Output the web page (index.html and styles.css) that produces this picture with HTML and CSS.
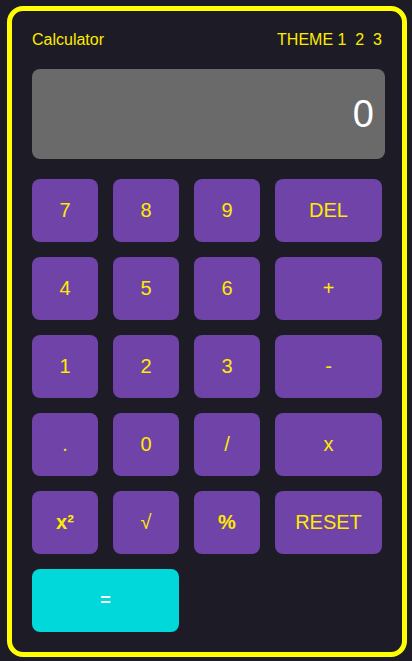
FILE: index.html
```html
<!DOCTYPE html>
<html>
<head>
<meta charset="utf-8">
<link rel="stylesheet" href="styles.css">
</head>
<body>
<div class="calc">
  <header class="top">
    <span class="title">Calculator</span>
    <span class="theme">THEME <span>1</span>  <span>2</span>  <span>3</span></span>
  </header>
  <div class="screen">0</div>
  <div class="keys">
    <button class="key">7</button>
    <button class="key">8</button>
    <button class="key">9</button>
    <button class="key">DEL</button>
    <button class="key">4</button>
    <button class="key">5</button>
    <button class="key">6</button>
    <button class="key">+</button>
    <button class="key">1</button>
    <button class="key">2</button>
    <button class="key">3</button>
    <button class="key">-</button>
    <button class="key">.</button>
    <button class="key">0</button>
    <button class="key">/</button>
    <button class="key">x</button>
    <button class="key bold">x²</button>
    <button class="key">√</button>
    <button class="key bold">%</button>
    <button class="key">RESET</button>
    <button class="key equal">=</button>
  </div>
</div>
</body>
</html>
```
FILE: styles.css
```css
html, body {
  margin: 0;
  padding: 0;
  background: #1c1b26;
}
body {
  padding: 6px 5px 4px 7px;
  font-family: "Liberation Sans", Arial, sans-serif;
}
.calc {
  box-sizing: border-box;
  width: 400px;
  height: 651px;
  border: 5px solid #ffff00;
  border-radius: 16px;
  padding: 20px 20px 0 20px;
}
.top {
  display: flex;
  justify-content: space-between;
  align-items: center;
  color: #ffeb00;
  font-size: 16px;
  line-height: 18px;
  height: 18px;
}
.theme {
  white-space: pre;
}
.screen {
  box-sizing: border-box;
  margin-top: 20px;
  height: 90px;
  width: 353px;
  background: #6a6a6a;
  border-radius: 8px;
  color: #ffffff;
  font-size: 38px;
  line-height: 1;
  display: flex;
  align-items: center;
  justify-content: flex-end;
  padding: 0 11px 0 0;
}
.keys {
  display: grid;
  grid-template-columns: 66px 66px 66px 107px;
  grid-auto-rows: 63px;
  gap: 15px;
  margin-top: 20px;
}
.key {
  border: none;
  border-radius: 8px;
  background: #6f43a7;
  color: #ffeb00;
  font-family: "Liberation Sans", Arial, sans-serif;
  font-size: 20px;
  padding: 0;
  margin: 0;
}
.bold {
  font-weight: bold;
  font-size: 20px;
}
.equal {
  grid-column: span 2;
  background: #00d8d9;
  color: #ffffff;
  font-weight: bold;
  font-size: 18px;
}
```
